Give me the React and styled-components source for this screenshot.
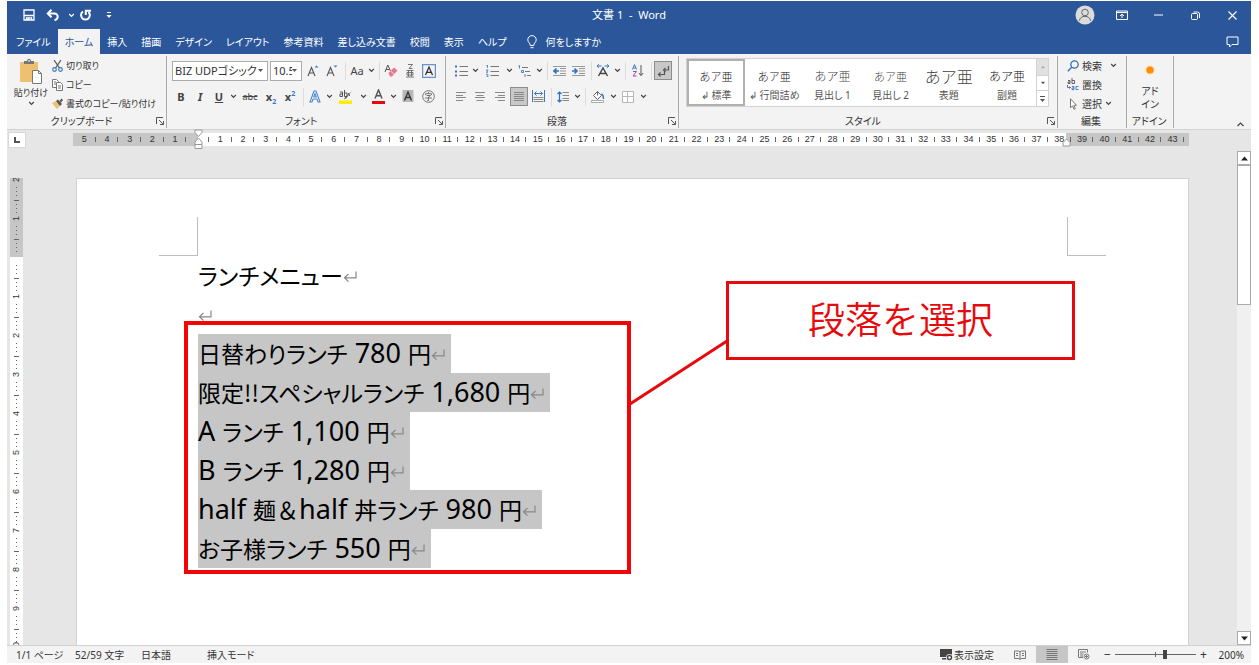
import React from "react";
import styled, { createGlobalStyle } from "styled-components";

const BLUE = "#2b579a";
const UI = `"Noto Sans", "Noto Sans CJK JP", sans-serif`;

const Global = createGlobalStyle`
  * { box-sizing: border-box; }
  body { margin: 0; background: #fff; font-family: ${UI}; font-size: 10px; line-height: 14px; color: #333; font-feature-settings: "palt"; }
  button, select, input { font: inherit; font-feature-settings: inherit; color: inherit; background: none; border: 0; padding: 0; margin: 0; }
  svg { display: block; flex: none; }
`;

const AppWindow = styled.div`
  height: 100vh;
  display: flex;
  flex-direction: column;
  border: solid #fff;
  border-width: 1px 8px 2px 7px;
  overflow: hidden;
`;

/* ---------- title bar ---------- */
const TitleBar = styled.header`
  display: grid;
  grid-template-columns: 1fr auto 1fr;
  align-items: center;
  height: 28px;
  flex: none;
  background: ${BLUE};
  color: #fff;
`;
const QuickAccess = styled.div`
  display: flex;
  align-items: center;
  padding-left: 12px;
`;
const QuickButton = styled.button`
  display: grid;
  place-items: center;
  width: ${(p) => p.$w || 20}px;
  height: 20px;
`;
const Title = styled.h1`
  margin: 0;
  font-size: 11px;
  font-weight: 400;
  line-height: 28px;
  white-space: pre;
`;
const WindowButtons = styled.div`
  display: flex;
  justify-content: flex-end;
`;
const WindowButton = styled.button`
  width: 37px;
  height: 28px;
  display: grid;
  place-items: center;
`;

/* ---------- tabs ---------- */
const TabBar = styled.nav`
  display: flex;
  height: 25px;
  flex: none;
  background: ${BLUE};
  color: #fff;
  padding-left: 2px;
`;
const Tab = styled.button`
  padding: 0 7px;
  white-space: nowrap;
  background: ${(p) => (p.$active ? "#f3f3f3" : "transparent")};
  color: ${(p) => (p.$active ? BLUE : "#fff")};
`;
const TellMe = styled.button`
  display: flex;
  align-items: center;
  gap: 9px;
  padding: 0 13px;
`;
const CommentButton = styled(WindowButton)`
  height: 25px;
  margin-left: auto;
`;

/* ---------- ribbon ---------- */
const Ribbon = styled.section`
  display: flex;
  flex: none;
  height: 76px;
  padding-top: 2px;
  background: #f3f3f3;
  border-bottom: 1px solid #d2d2d2;
`;
const Group = styled.div`
  display: flex;
  flex-direction: column;
  width: ${(p) => (p.$w ? p.$w + "px" : "auto")};
  flex: ${(p) => (p.$w ? "none" : "1 1 0")};
  min-width: 0;
  height: 72px;
  border-right: 1px solid #ababab;
`;
const GroupBody = styled.div`
  display: flex;
  flex-direction: ${(p) => (p.$col ? "column" : "row")};
  flex: 1;
  min-height: 0;
  padding-left: ${(p) => p.$pad || 0}px;
`;
const GroupFoot = styled.div`
  display: flex;
  align-items: center;
  height: 14px;
  flex: none;
  padding-right: 2px;
`;
const GroupName = styled.span`
  flex: 1;
  text-align: center;
  white-space: nowrap;
`;
const Launcher = styled.button`
  width: 8px;
  height: 10px;
`;
const PasteButton = styled.button`
  width: 42px;
  display: flex;
  flex-direction: column;
  align-items: center;
  gap: 1px;
  padding-top: 2px;
  font-size: 9px;
  white-space: nowrap;
`;
const CommandList = styled.div`
  display: flex;
  flex-direction: column;
`;
const Command = styled.button`
  display: flex;
  align-items: center;
  gap: 3px;
  height: 19px;
  font-size: ${(p) => (p.$compact ? 9 : 10)}px;
  white-space: nowrap;
`;
const ToolRow = styled.div`
  display: flex;
  align-items: center;
  height: 26px;
  padding-top: 3px;
`;
const Tool = styled.button`
  width: ${(p) => p.$w || 20}px;
  height: 19px;
  flex: none;
  display: grid;
  place-items: center;
  background: ${(p) => (p.$on ? "#c8c8c8" : "transparent")};
  border: ${(p) => (p.$on ? "1px solid #8c8c8c" : "0")};
  font-size: 11px;
  color: #444;
`;
const Divider = styled.span`
  width: ${(p) => p.$w}px;
  height: 18px;
  flex: none;
  background: linear-gradient(#dcdcdc, #dcdcdc) center / 1px 100% no-repeat;
`;
const Combo = styled.label`
  display: flex;
  align-items: center;
  width: ${(p) => p.$w}px;
  height: 20px;
  flex: none;
  margin-right: 2px;
  padding: 0 4px 0 2px;
  background: #fff;
  border: 1px solid #ababab;
  select { appearance: none; flex: 1; width: 10px; min-width: 0; font-size: 11px; overflow: hidden; text-overflow: clip; outline: 0; }
`;
const Glyph = styled.span`
  font-size: ${(p) => p.$size || 11}px;
  line-height: 14px;
  font-weight: ${(p) => (p.$bold ? 700 : 400)};
  font-style: ${(p) => (p.$italic ? "italic" : "normal")};
  text-decoration: ${(p) => p.$line || "none"};
  sub, sup { font-size: 7px; line-height: 0; color: #3a78c3; }
`;

/* ---------- style gallery ---------- */
const Gallery = styled.div`
  display: flex;
  flex: 1;
  height: 49px;
  margin: 2px 8px 0 7px;
  background: #fff;
  border: 1px solid #d2d2d2;
`;
const StyleCard = styled.button`
  flex: 1;
  min-width: 0;
  display: flex;
  flex-direction: column;
  align-items: center;
  justify-content: flex-end;
  padding-bottom: 2px;
  border: 2px solid ${(p) => (p.$on ? "#b0b0b0" : "transparent")};
  color: #555;
  white-space: nowrap;
`;
const Sample = styled.span`
  font-family: "Noto Sans CJK JP", sans-serif;
  font-feature-settings: normal;
  font-size: ${(p) => p.$size}px;
  font-weight: 300;
  line-height: 24px;
  color: ${(p) => (p.$dark ? "#111" : "#444")};
`;
const GalleryScroll = styled.div`
  width: 12px;
  display: grid;
  grid-template-rows: 1fr 1fr 1fr;
  border-left: 1px solid #d2d2d2;
`;
const GalleryButton = styled.button`
  display: grid;
  place-items: center;
  background: ${(p) => (p.$off ? "#e1e1e1" : "#fff")};
  & + & { border-top: 1px solid #d2d2d2; }
`;
const AddInButton = styled.button`
  flex: 1;
  display: flex;
  flex-direction: column;
  align-items: center;
  line-height: 13px;
  svg { margin: 9px 0 10px; }
`;
const RibbonEnd = styled.div`
  width: 77px;
  flex: none;
  display: flex;
  align-items: flex-end;
  justify-content: flex-end;
  padding: 0 7px 2px 0;
`;

/* ---------- workspace ---------- */
const Workspace = styled.main`
  display: grid;
  grid-template-columns: 66px 1fr 48px 14px;
  grid-template-rows: 48px 1fr;
  flex: 1;
  min-height: 0;
  background: #e6e6e6;
`;
const TabStop = styled.button`
  width: 18px;
  height: 16px;
  margin: 2px 0 0 1px;
  display: grid;
  place-items: center;
  background: #fff;
  border: 1px solid #d8d8d8;
`;
const HRuler = styled.div`
  position: relative;
  display: flex;
  height: 13px;
  margin-top: 3px;
  padding-right: 5px;
  background: linear-gradient(90deg, #c6c6c6 11.2%, #fff 11.2%, #fff 89%, #c6c6c6 89%);
`;
const HCell = styled.span`
  flex: 1 1 0;
  min-width: 0;
  display: flex;
  align-items: center;
  justify-content: center;
  font: 9px/13px "Liberation Sans", sans-serif;
  background: linear-gradient(#666, #666) right center / 1px 5px no-repeat;
`;
const Marker = styled.span`
  position: absolute;
  left: ${(p) => p.$at};
  top: ${(p) => p.$top}px;
  margin-left: -4px;
`;
const VRuler = styled.div`
  grid-column: 1;
  grid-row: 2;
  width: 13px;
  margin-left: 3px;
  overflow: hidden;
  min-height: 0;
  background: linear-gradient(#c6c6c6 79px, #fff 79px);
`;
const VTrack = styled.div`
  margin-top: -4px;
`;
const VCell = styled.div`
  height: 39px;
  display: flex;
  flex-direction: column;
  align-items: center;
  justify-content: space-between;
`;
const VNumber = styled.span`
  writing-mode: vertical-rl;
  rotate: 180deg;
  height: 10px;
  text-align: center;
  font: 9px/13px "Liberation Sans", sans-serif;
`;
const VTick = styled.i`
  width: ${(p) => (p.$long ? 5 : 1)}px;
  height: 1px;
  background: #666;
`;
const Page = styled.article`
  grid-column: 2;
  grid-row: 2;
  position: relative;
  margin-left: 3px;
  min-height: 0;
  background: #fff;
  border: solid #d2d2d2;
  border-width: 1px 1px 0 1px;
`;
const MarginCorners = styled.div`
  display: flex;
  justify-content: space-between;
  align-items: flex-end;
  height: 77px;
  padding: 0 82px;
`;
const Corner = styled.i`
  width: 39px;
  height: 39px;
  border: solid #bdbdbd;
  border-width: ${(p) => (p.$right ? "0 0 1px 1px" : "0 1px 1px 0")};
`;
const Body = styled.div`
  padding-left: 121px;
  color: #000;
  font-size: 23px;
  font-family: "Noto Sans CJK JP", sans-serif;
`;
const Line = styled.p`
  display: flex;
  margin: 0;
  height: 39px;
`;
const Run = styled.span`
  display: flex;
  align-items: center;
  white-space: pre;
  line-height: 39px;
  padding-right: ${(p) => (p.$selected ? 6 : 0)}px;
  background: ${(p) => (p.$selected ? "#c6c6c6" : "transparent")};
`;
const Latin = styled.span`
  font-family: "Noto Sans", sans-serif;
  font-size: 27px;
  line-height: 38px;
`;
const FullWidth = styled.span`
  font-feature-settings: normal;
`;
const SelectionFrame = styled.div`
  position: absolute;
  left: 107px;
  top: 142px;
  width: 447px;
  height: 253px;
  border: 4px solid #f20505;
`;
const Connector = styled.svg`
  position: absolute;
  left: 552px;
  top: 160px;
`;
const Callout = styled.div`
  position: absolute;
  left: 649px;
  top: 102px;
  width: 349px;
  height: 79px;
  border: 3px solid #e8090c;
  color: #e8090c;
  text-align: center;
  font: 350 37px/68px "Noto Sans CJK JP", sans-serif;
  font-feature-settings: normal;
`;
const ScrollBar = styled.div`
  grid-column: 4;
  grid-row: 1 / 3;
  margin-top: 21px;
  display: flex;
  flex-direction: column;
  background: #f0f0f0;
`;
const ScrollArrow = styled.button`
  height: 14px;
  display: grid;
  place-items: center;
  background: #fff;
  border: 1px solid #ababab;
`;
const ScrollTrack = styled.div`
  flex: 1;
`;
const ScrollThumb = styled.div`
  height: 30%;
  background: #fff;
  border: 1px solid #ababab;
`;

/* ---------- status bar ---------- */
const StatusBar = styled.footer`
  display: flex;
  align-items: center;
  flex: none;
  height: 18px;
  background: #f3f3f3;
  border-top: 1px solid #d2d2d2;
  padding: 0 7px 0 9px;
`;
const StatusItem = styled.span`
  width: ${(p) => p.$w}px;
  white-space: nowrap;
`;
const DisplaySettings = styled.button`
  display: flex;
  align-items: center;
  gap: 1px;
  margin-left: auto;
  margin-right: 10px;
`;
const ViewButton = styled.button`
  width: 32px;
  height: 17px;
  display: grid;
  place-items: center;
  background: ${(p) => (p.$on ? "#c6c6c6" : "transparent")};
`;
const ZoomButton = styled.button`
  width: 15px;
  font-size: 12px;
`;
const ZoomSlider = styled.input`
  appearance: none;
  width: 81px;
  height: 12px;
  background: linear-gradient(#666, #666) center / 100% 1px no-repeat, linear-gradient(#666, #666) center / 1px 5px no-repeat;
  &::-webkit-slider-thumb { appearance: none; width: 4px; height: 9px; background: #444; }
`;
const ZoomValue = styled.output`
  width: 33px;
  text-align: right;
`;

/* ---------- drawings ---------- */
const Svg = ({ w = 16, h = w, c = "#555", sw = 1, children }) => (
  <svg width={w} height={h} viewBox={`0 0 ${w} ${h}`} fill="none" stroke={c} strokeWidth={sw} aria-hidden="true">{children}</svg>
);
const Chevron = ({ up, c = "#444" }) => (
  <Svg w={7} h={5} c={c} sw={1.2}><path d={up ? "M.5 4 3.5 1 6.5 4" : "M1.2 1 3.5 3.4 5.8 1"} /></Svg>
);
const Caret = ({ up, c = "#555", s = 5 }) => (
  <svg width={s} height={s} viewBox="0 0 5 5" fill={c} aria-hidden="true"><path d={up ? "M0 4 2.500 1 5 4z" : "M0 1h5L2.500 4z"} /></svg>
);
const LaunchIcon = () => <Svg w={8} h={8} c="#555"><path d="M.5 7V.5H7M3 3l4 4M7.500 4v3.500H4" /></Svg>;

const SaveIcon = () => (
  <Svg w={12} c="#fff" sw={1.3}><path d="M1 1h10v10H1zM1 6.500h10M3.500 11V8.800h5V11" /><path d="M4.500 9h2v2h-2z" fill="#fff" stroke="none" /></Svg>
);
const UndoIcon = () => (
  <Svg w={14} h={12} c="#fff" sw={2}><path d="M2 4.500h6.500a3.200 3.200 0 0 1 0 6.400" /><path d="M5.500.8 1.800 4.500l3.700 3.700" /></Svg>
);
const RedoIcon = () => (
  <Svg w={13} h={12} c="#fff" sw={2}><path d="M4 2.500a4.400 4.400 0 1 0 5.500.5" /><path d="M6.800 6V1.800H12" /></Svg>
);
const QuickMore = () => (
  <Svg w={6} h={7} c="#fff"><path d="M1 .5h4" /><path d="M.5 3h5L3 6z" fill="#fff" stroke="none" /></Svg>
);
const Avatar = () => (
  <Svg w={20} c="#666"><circle cx="10" cy="10" r="9.500" fill="#dcdcdc" stroke="none" /><circle cx="10" cy="7.500" r="3.300" /><path d="M4.500 15.800c0-6 11-6 11 0" /></Svg>
);
const RibbonDisplay = () => <Svg w={12} h={10} c="#fff"><path d="M.5 1h11v8.500H.5zM.5 2.500h11M6 8V4M4 6l2-2 2 2" /></Svg>;
const MinIcon = () => <Svg w={9} h={2} c="#fff"><path d="M0 1h9" /></Svg>;
const RestoreIcon = () => <Svg w={9} c="#fff"><rect x=".5" y="2.500" width="6" height="6" rx="1" /><path d="M2.500 1h4a2 2 0 0 1 2 2v4" /></Svg>;
const CloseIcon = () => <Svg w={9} c="#fff" sw={1.1}><path d="m.5.5 8 8m0-8-8 8" /></Svg>;
const CommentIcon = () => <Svg w={13} h={12} c="#fff"><path d="M1 1h11v7.500H6L3.500 11V8.500H1z" /></Svg>;
const BulbIcon = () => (
  <Svg w={10} h={14} c="#fff"><path d="M3.300 10.500C3.300 8 .8 7.500.8 4.800a4.200 4.200 0 0 1 8.400 0c0 2.700-2.500 3.200-2.500 5.700zM3.500 12.700h3" /></Svg>
);
const PasteIcon = () => (
  <Svg w={24} h={27} c="none">
    <rect x="1" y="4" width="18" height="20" rx="1" fill="#eec170" />
    <path d="M5 6V3h3c0-3 4-3 4 0h3v3z" fill="#777" /><circle cx="10" cy="2.800" r=".9" fill="#f3f3f3" />
    <path d="M13.500 12.500h6l3 3v10h-9z" fill="#fff" stroke="#777" /><path d="M19.500 12.500v3h3" stroke="#777" />
  </Svg>
);
const CutIcon = () => (
  <Svg w={11} h={12} c="#555" sw={1.2}><path d="m2 0 5.500 8M9 0 3.500 8" /><g stroke="#3a78c3"><circle cx="2.500" cy="9.500" r="1.800" /><circle cx="8.500" cy="9.500" r="1.800" /></g></Svg>
);
const CopyIcon = () => (
  <Svg w={11} h={12} c="#777"><path d="M.5.5h4l2 2v6h-6z" fill="#fff" /><path d="M4.500 3.500h4l2 2v6h-6zM6 7h3M6 9h3M2 3h2M2 5h2" fill="#fff" /></Svg>
);
const BrushIcon = () => (
  <Svg w={11} h={12} c="none"><path d="m0 5 4-2 4 5-3 3z" fill="#eec170" /><path d="m4 3 2-1.500 4 4.500L8 8z" fill="#555" /><path d="m7.500 3 2-2.500L11 2 9 4.500z" fill="#555" /></Svg>
);
const GrowShrink = ({ up }) => (
  <Svg w={14} h={14} c="#555" sw={1.1}><path d="m2 12 3.500-8.500L9 12M3.200 9h4.600" /><path d={up ? "m8.500 3.500 2-2 2 2z" : "M8.500 1.500h4l-2 2z"} fill="#3a78c3" stroke="none" /></Svg>
);
const EraserIcon = () => (
  <Svg w={14} c="#555"><path d="m1 8 2.800-7L6.500 7M2 5.500h3.500" /><path d="m4.500 9 5.500-5.500 3.500 3L8 12.500H6z" fill="#e8788c" stroke="none" /><path d="m6.500 7 4 3.500" stroke="#fff" strokeWidth=".7" /></Svg>
);
const RubyIcon = () => (
  <Svg w={12} h={14} c="#666" sw={0.9}><path d="M4 .5h4.500L5 4.500h3.500M2.500 6.500h7M4.500 6.500v6M7.500 6.500v6M3 8.500h6V11H3zM2 13h8" /></Svg>
);
const BoxAIcon = () => <Svg w={14} c="#333" sw={1.3}><path d="M.6.600h12.800v12.800H.6z" stroke="#6b93c7" /><path d="M3.500 11 7 3l3.500 8M4.800 8.300h4.400" /></Svg>;
const OutlineA = () => (
  <Svg w={12} h={13} c="#4a86cf" sw={1.1}><path d="M1 12 5 1h2l4 11H9L8 9H4l-1 3z" fill="#fff" /><path d="M4.700 7 6 3.500 7.300 7z" /></Svg>
);
const HighlightIcon = () => (
  <Svg w={14} h={15} c="#555"><path d="M0 11.500h13v3.500H0z" fill="#ffec00" stroke="none" /><path d="M1 3h2.500v4.500H1V5h2.500M5.500 1v6.500H8V4H5.500M9.500 4l1 3" /><path d="M13 2 7 9.500 5 10.500 6 8.500z" fill="#555" stroke="none" /></Svg>
);
const FontColorIcon = () => <Svg w={13} h={15} c="#555" sw={1.5}><path d="m3 9.500 3.500-8.500L10 9.500M4.300 6.800h4.400" /><path d="M0 12h13v3H0z" fill="#e8090c" stroke="none" /></Svg>;
const ShadeAIcon = () => <Svg w={12} h={13} c="#333" sw={1.4}><path d="M.5 0h11v12H.5z" fill="#b8b8b8" stroke="none" /><path d="M2.500 10.500 6 2l3.500 8.500M3.800 7.500h4.400" /></Svg>;
const CircleCharIcon = () => <Svg w={13} c="#666" sw={0.9}><circle cx="6.500" cy="6.500" r="5.800" /><path d="M6.500 2v1.500M3.500 5V3.700h6V5M4.500 5.500h4l-2 1.500v3.500H5.200M3 8h7" /></Svg>;

const ListIcon = ({ kind }) => (
  <Svg w={13} h={12} c="#777">
    {kind === "multi" ? <path d="M4 2.500h6M7 6.500h5M9 10.500h4" /> : <path d="M4.500 1.500H13M4.500 6.500H13M4.500 10.500H13" />}
    <g stroke="#3a78c3" fill="none">
      {kind === "bullet" && <path d="M0 1.500h2M0 6.500h2M0 10.500h2" strokeWidth="2" />}
      {kind === "number" && <path d="M.3.800 1.500.3v2.500M0 5h1.800v1L.3 7.200H2M0 9.300h1.800V12H0" strokeWidth=".9" />}
      {kind === "multi" && <path d="M.5 1 1.500.500v3M3.500 5.500h2v2h-2zM7 9v3" strokeWidth=".9" />}
    </g>
  </Svg>
);
const IndentIcon = ({ out }) => (
  <Svg w={13} h={12} c="#999"><path d="M0 1.500h13M7 3.500h6M7 6h6M7 8.500h6M0 10.500h13" /><path d={out ? "M6 6H1m2.500-2.500L1 6l2.500 2.500" : "M0 6h5M2.500 3.500 5 6 2.500 8.500"} stroke="#2f6fbf" strokeWidth="1.600" /></Svg>
);
const TextScaleIcon = () => (
  <Svg w={14} h={13} c="#444" sw={1.4}><path d="M2.500 12 7 4l4.500 8M4.500 9.500h5" /><path d="M1 2h4.500M8.500 2H13M3 .3 1 2l2 1.700M11 .3 13 2l-2 1.700" stroke="#3a78c3" strokeWidth="1" /></Svg>
);
const SortIcon = () => (
  <Svg w={12} h={13} c="#555"><path d="M9 1v10.500M6.800 9 9 11.500 11.200 9" /><path d="m.5 5.500 2-5 2 5M1.200 4h2.600" stroke="#3a78c3" /><path d="M1 7.500h3.500L1 12h3.500" stroke="#9a4fb5" /></Svg>
);
const MarksIcon = () => <Svg w={13} h={12} c="#555" sw={1.2}><path d="M11.500 1v4H6.500M8.500 3l-2 2 2 2M7.500 6v3.500h-6M3.500 7.500l-2 2 2 2" /></Svg>;
const AlignIcon = ({ kind }) => {
  const d = {
    left: "M0 1.500h10M0 4.500h7M0 6.500h10M0 9.500h7",
    center: "M0 1.500h10M1.500 4.500h7M0 6.500h10M1.500 9.500h7",
    right: "M0 1.500h10M3 4.500h7M0 6.500h10M3 9.500h7",
    justify: "M0 1.500h10M0 3.500h10M0 5.500h10M0 7.500h10M0 9.500h10",
  }[kind];
  return <Svg w={10} h={11} c="#888"><path d={d} /></Svg>;
};
const DistributeIcon = () => (
  <Svg w={13} c="#888"><path d="M1.500 7.500h10M1.500 9.500h10M1.500 11.500h10" /><path d="M.5 0v12M12.500 0v12M2.500 3.500h8M4.500 1.500l-2 2 2 2M8.500 1.500l2 2-2 2" stroke="#3a78c3" /></Svg>
);
const SpacingIcon = () => (
  <Svg w={12} h={12} c="#888"><path d="M5.500 1.500H12M5.500 4.500H12M5.500 7.500H12M5.500 9.500H12" /><path d="M2.500 1v10M.5 3l2-2 2 2M.5 9l2 2 2-2" stroke="#2f6fbf" strokeWidth="1.200" /></Svg>
);
const BucketIcon = () => (
  <Svg w={14} h={13} c="#666"><path d="m2.500 5.500 4-4 4 4-4 4zM6.500 1.500v4" fill="#fff" /><path d="M10.500 4c2 1 2 3 2 5" stroke="#3a78c3" strokeWidth="1.400" /><path d="M.5 10.500h12v2H.5z" fill="#fff" stroke="#aaa" /></Svg>
);
const BordersIcon = () => <Svg w={12} c="#b8b8b8"><path d="M.5.500h11v11H.5zM5.500 0v12M0 5.500h12" fill="#fff" /></Svg>;
const SearchIcon = () => <Svg w={12} c="#2f6fbf" sw={1.3}><circle cx="7.500" cy="4.500" r="3.700" /><path d="M4.700 7.300.8 11.200" /></Svg>;
const ReplaceIcon = () => (
  <Svg w={12} h={13} c="#555" sw={0.9}><path d="M1 2.500h2v3H1V4h2M5 0v5.500h2.500v-3H5" /><path d="M.5 7v2.500h3M2.300 8.300l1.200 1.200-1.200 1.200" stroke="#7b4fc0" /><path d="M5 8.500h2v3.200H5V10h2M11.500 8.500H9v3h2.500" stroke="#3a78c3" /></Svg>
);
const PointerIcon = () => <Svg w={12} h={12} c="#777"><path d="M3.500.8v9l2-2 1.500 3.500 1.300-.600L6.800 7.300h2.700z" fill="#fff" /></Svg>;
const AddInIcon = () => <Svg w={10} c="none"><circle cx="5" cy="5" r="4.500" fill="#ffd9a0" /><circle cx="5" cy="5" r="3.600" fill="#ff8c00" /></Svg>;
const ReturnMark = () => <Svg w={14} h={14} c="#888" sw={1.2}><path d="M13 2.500v6.300H1.500M5.500 5 1.500 8.800l4 3.800" /></Svg>;
const HourGlass = () => (
  <Svg w={9} h={21} c="#999"><path d="M1 1h7v2.500L4.500 7.500 1 3.500zM4.500 9 8 13v2.500H1V13zM1 15.500h7v4H1z" fill="#fff" /></Svg>
);
const RightIndent = () => <Svg w={9} h={9} c="#999"><path d="M4.500 1 8 4.500V8H1V4.500z" fill="#fff" /></Svg>;
const DisplayIcon = () => (
  <Svg w={13} h={12} c="none"><path d="M0 0h12v8H0zM2 9h5v1.500H2z" fill="#444" /><circle cx="9.500" cy="8.500" r="3.500" fill="#f3f3f3" /><circle cx="9.500" cy="8.500" r="2" stroke="#444" strokeWidth="1.400" /></Svg>
);
const ReadIcon = () => <Svg w={12} h={10} c="#777"><path d="M.5 1h4.300L6 2l1.200-1h4.300v7.500H7.200L6 9.500 4.800 8.500H.5zM6 2v7.500M2 3.500h2M2 5.500h2M8 3.500h2M8 5.500h2" /></Svg>;
const PrintIcon = () => <Svg w={12} h={12} c="#777"><path d="M.5 .5h11M.5 2.500h11M.5 4.500h11M.5 6.500h11M.5 8.500h11M.5 10.500h11" /></Svg>;
const WebIcon = () => <Svg w={12} h={11} c="#777"><path d="M5 8.500H.5v-8h9v3M2 3h6M2 5h3.500M2 7h3" /><circle cx="8.500" cy="7.500" r="2.500" /><path d="M7 7.500h3M8.500 6v3" /></Svg>;

/* ---------- data ---------- */
const tabs = ["ファイル", "ホーム", "挿入", "描画", "デザイン", "レイアウト", "参考資料", "差し込み文書", "校閲", "表示", "ヘルプ"];
const styleCards = [
  { name: "標準", size: 11, dark: true, mark: true },
  { name: "行間詰め", size: 11, dark: true, mark: true },
  { name: "見出し 1", size: 12 },
  { name: "見出し 2", size: 11 },
  { name: "表題", size: 16 },
  { name: "副題", size: 12, dark: true },
];
const lines = [
  { text: "ランチメニュー" },
  { text: "" },
  { text: "日替わりランチ 780 円", selected: true },
  { text: "限定!!スペシャルランチ 1,680 円", selected: true },
  { text: "A ランチ 1,100 円", selected: true },
  { text: "B ランチ 1,280 円", selected: true },
  { text: "half 麺＆half 丼ランチ 980 円", selected: true },
  { text: "お子様ランチ 550 円", selected: true },
];
const range = (a, b) => Array.from({ length: Math.abs(b - a) + 1 }, (_, i) => a + (b > a ? i : -i));
const rulerNumbers = [...range(5, 1), "", ...range(1, 43)];
const verticalNumbers = [2, 1, "", ...range(1, 10)];

const Drop = ({ w = 10, label }) => <Tool $w={w} aria-label={label}><Chevron /></Tool>;
const Foot = ({ name, launch }) => (
  <GroupFoot><GroupName>{name}</GroupName>{launch && <Launcher aria-label={`${name}の設定`}><LaunchIcon /></Launcher>}</GroupFoot>
);

function RibbonBar() {
  return (
    <Ribbon>
      <Group $w={160}>
        <GroupBody $pad={3}>
          <PasteButton><PasteIcon /><span>貼り付け</span><Chevron /></PasteButton>
          <CommandList>
            <Command $compact><CutIcon />切り取り</Command>
            <Command $compact><CopyIcon />コピー</Command>
            <Command $compact><BrushIcon />書式のコピー/貼り付け</Command>
          </CommandList>
        </GroupBody>
        <Foot name="クリップボード" launch />
      </Group>

      <Group $w={279}>
        <GroupBody $col $pad={5}>
          <ToolRow>
            <Combo $w={96}><select aria-label="フォント"><option>BIZ UDPゴシック</option></select><Caret /></Combo>
            <Combo $w={32}><select aria-label="フォント サイズ"><option>10.5</option></select><Caret /></Combo>
            <Tool $w={18} aria-label="拡大"><GrowShrink up /></Tool>
            <Tool $w={20} aria-label="縮小"><GrowShrink /></Tool>
            <Divider $w={6} />
            <Tool $w={18}><Glyph>Aa</Glyph></Tool>
            <Drop label="文字種の変換" />
            <Divider $w={6} />
            <Tool $w={18} aria-label="書式のクリア"><EraserIcon /></Tool>
            <Tool $w={20} aria-label="ルビ"><RubyIcon /></Tool>
            <Tool $w={18} aria-label="囲み線"><BoxAIcon /></Tool>
          </ToolRow>
          <ToolRow>
            <Tool $w={18}><Glyph $bold>B</Glyph></Tool>
            <Tool><Glyph $bold $italic>I</Glyph></Tool>
            <Tool $w={18}><Glyph $bold $line="underline">U</Glyph></Tool>
            <Drop label="下線の種類" />
            <Tool $w={24}><Glyph $size={9} $line="line-through">abc</Glyph></Tool>
            <Tool $w={18}><Glyph $bold>x<sub>2</sub></Glyph></Tool>
            <Tool><Glyph $bold>x<sup>2</sup></Glyph></Tool>
            <Divider $w={6} />
            <Tool $w={18} aria-label="文字の効果"><OutlineA /></Tool>
            <Drop label="文字の効果の種類" />
            <Tool aria-label="蛍光ペン" $w={24}><HighlightIcon /></Tool>
            <Drop label="蛍光ペンの色" />
            <Tool aria-label="フォントの色"><FontColorIcon /></Tool>
            <Drop label="フォントの色の一覧" />
            <Tool aria-label="文字の網かけ"><ShadeAIcon /></Tool>
            <Tool aria-label="囲い文字"><CircleCharIcon /></Tool>
          </ToolRow>
        </GroupBody>
        <Foot name="フォント" launch />
      </Group>

      <Group $w={233}>
        <GroupBody $col $pad={6}>
          <ToolRow>
            <Tool $w={18} aria-label="箇条書き"><ListIcon kind="bullet" /></Tool>
            <Drop label="箇条書きの種類" />
            <Tool $w={24} aria-label="段落番号"><ListIcon kind="number" /></Tool>
            <Drop label="段落番号の種類" />
            <Tool aria-label="アウトライン"><ListIcon kind="multi" /></Tool>
            <Drop label="アウトラインの種類" />
            <Divider $w={6} />
            <Tool $w={18} aria-label="インデントを減らす"><IndentIcon out /></Tool>
            <Tool aria-label="インデントを増やす"><IndentIcon /></Tool>
            <Divider $w={6} />
            <Tool $w={18} aria-label="拡張書式"><TextScaleIcon /></Tool>
            <Drop label="拡張書式の種類" />
            <Divider $w={6} />
            <Tool aria-label="並べ替え"><SortIcon /></Tool>
            <Divider $w={6} />
            <Tool $w={18} $on aria-label="編集記号の表示"><MarksIcon /></Tool>
          </ToolRow>
          <ToolRow>
            <Tool $w={18} aria-label="左揃え"><AlignIcon kind="left" /></Tool>
            <Tool aria-label="中央揃え"><AlignIcon kind="center" /></Tool>
            <Tool aria-label="右揃え"><AlignIcon kind="right" /></Tool>
            <Tool $w={18} $on aria-label="両端揃え"><AlignIcon kind="justify" /></Tool>
            <Tool aria-label="均等割り付け"><DistributeIcon /></Tool>
            <Divider $w={6} />
            <Tool $w={18} aria-label="行間"><SpacingIcon /></Tool>
            <Drop label="行間の一覧" />
            <Divider $w={6} />
            <Tool aria-label="塗りつぶし"><BucketIcon /></Tool>
            <Drop label="塗りつぶしの色" />
            <Tool aria-label="罫線"><BordersIcon /></Tool>
            <Drop label="罫線の種類" />
          </ToolRow>
        </GroupBody>
        <Foot name="段落" launch />
      </Group>

      <Group>
        <GroupBody>
          <Gallery>
            {styleCards.map((s, i) => (
              <StyleCard key={s.name} $on={i === 0}>
                <Sample $size={s.size} $dark={s.dark}>あア亜</Sample>
                <span>{s.mark && "↲ "}{s.name}</span>
              </StyleCard>
            ))}
            <GalleryScroll>
              <GalleryButton $off aria-label="上へ"><Caret up c="#aaa" s={4} /></GalleryButton>
              <GalleryButton aria-label="下へ"><Caret s={4} /></GalleryButton>
              <GalleryButton aria-label="その他"><Svg w={5} h={6}><path d="M0 .5h5" /><path d="M0 3h5L2.500 6z" fill="#555" stroke="none" /></Svg></GalleryButton>
            </GalleryScroll>
          </Gallery>
        </GroupBody>
        <Foot name="スタイル" launch />
      </Group>

      <Group $w={69}>
        <GroupBody $pad={9}>
          <CommandList>
            <Command><SearchIcon />検索&nbsp;&nbsp;<Chevron /></Command>
            <Command><ReplaceIcon />置換</Command>
            <Command><PointerIcon />選択<Chevron /></Command>
          </CommandList>
        </GroupBody>
        <Foot name="編集" />
      </Group>

      <Group $w={47}>
        <GroupBody><AddInButton><AddInIcon />アド<br />イン</AddInButton></GroupBody>
        <Foot name="アドイン" />
      </Group>
      <RibbonEnd><button aria-label="リボンを折りたたむ"><Chevron up /></button></RibbonEnd>
    </Ribbon>
  );
}

function DocumentLine({ text, selected }) {
  const parts = text.split(/( ?[A-Za-z0-9,]+ ?|＆)/);
  return (
    <Line>
      <Run $selected={selected}>
        {text && (
          <span>
            {parts.map((part, i) => {
              if (part === "＆") return <FullWidth key={i}>{part}</FullWidth>;
              return i % 2 ? <Latin key={i}>{part}</Latin> : part;
            })}
          </span>
        )}
        <ReturnMark />
      </Run>
    </Line>
  );
}

export default function App() {
  return (
    <>
      <Global />
      <AppWindow>
        <TitleBar>
          <QuickAccess>
            <QuickButton aria-label="上書き保存"><SaveIcon /></QuickButton>
            <QuickButton $w={28} aria-label="元に戻す"><UndoIcon /></QuickButton>
            <QuickButton $w={8} aria-label="元に戻す一覧"><Chevron c="#fff" /></QuickButton>
            <QuickButton $w={20} aria-label="やり直し"><RedoIcon /></QuickButton>
            <QuickButton $w={28} aria-label="カスタマイズ"><QuickMore /></QuickButton>
          </QuickAccess>
          <Title>文書 1  -  Word</Title>
          <WindowButtons>
            <WindowButton aria-label="アカウント"><Avatar /></WindowButton>
            <WindowButton aria-label="リボンの表示"><RibbonDisplay /></WindowButton>
            <WindowButton aria-label="最小化"><MinIcon /></WindowButton>
            <WindowButton aria-label="元に戻す(縮小)"><RestoreIcon /></WindowButton>
            <WindowButton aria-label="閉じる"><CloseIcon /></WindowButton>
          </WindowButtons>
        </TitleBar>
        <TabBar>
          {tabs.map((t) => <Tab key={t} $active={t === "ホーム"}>{t}</Tab>)}
          <TellMe><BulbIcon />何をしますか</TellMe>
          <CommentButton aria-label="コメント"><CommentIcon /></CommentButton>
        </TabBar>
        <RibbonBar />
        <Workspace>
          <TabStop aria-label="タブ"><Svg w={6} h={6} sw={2}><path d="M1 0v5h5" /></Svg></TabStop>
          <HRuler>
            {rulerNumbers.map((n, i) => <HCell key={i}>{n}</HCell>)}
            <Marker $at="11.2%" $top={-4}><HourGlass /></Marker>
            <Marker $at="89%" $top={5}><RightIndent /></Marker>
          </HRuler>
          <ScrollBar>
            <ScrollArrow aria-label="上にスクロール"><Caret up c="#222" s={7} /></ScrollArrow>
            <ScrollTrack><ScrollThumb /></ScrollTrack>
            <ScrollArrow aria-label="下にスクロール"><Caret c="#222" s={7} /></ScrollArrow>
          </ScrollBar>
          <VRuler>
            <VTrack>
              {verticalNumbers.map((n, i) => (
                <VCell key={i}>
                  <VNumber>{n}</VNumber>
                  <VTick /><VTick /><VTick /><VTick $long /><VTick /><VTick /><VTick />
                </VCell>
              ))}
            </VTrack>
          </VRuler>
          <Page>
            <MarginCorners><Corner /><Corner $right /></MarginCorners>
            <Body>{lines.map((l, i) => <DocumentLine key={i} {...l} />)}</Body>
            <SelectionFrame />
            <Connector width="100" height="68" viewBox="0 0 100 68" aria-hidden="true"><path d="M1 65 98 2" stroke="#e8090c" strokeWidth="3" /></Connector>
            <Callout>段落を選択</Callout>
          </Page>
        </Workspace>
        <StatusBar>
          <StatusItem $w={59}>1/1 ページ</StatusItem>
          <StatusItem $w={66}>52/59 文字</StatusItem>
          <StatusItem $w={66}>日本語</StatusItem>
          <StatusItem $w={66}>挿入モード</StatusItem>
          <DisplaySettings><DisplayIcon />表示設定</DisplaySettings>
          <ViewButton aria-label="閲覧モード"><ReadIcon /></ViewButton>
          <ViewButton $on aria-label="印刷レイアウト"><PrintIcon /></ViewButton>
          <ViewButton aria-label="Web レイアウト"><WebIcon /></ViewButton>
          <ZoomButton aria-label="縮小">−</ZoomButton>
          <ZoomSlider type="range" min="0" max="100" defaultValue="62" aria-label="ズーム" />
          <ZoomButton aria-label="拡大">+</ZoomButton>
          <ZoomValue>200%</ZoomValue>
        </StatusBar>
      </AppWindow>
    </>
  );
}
